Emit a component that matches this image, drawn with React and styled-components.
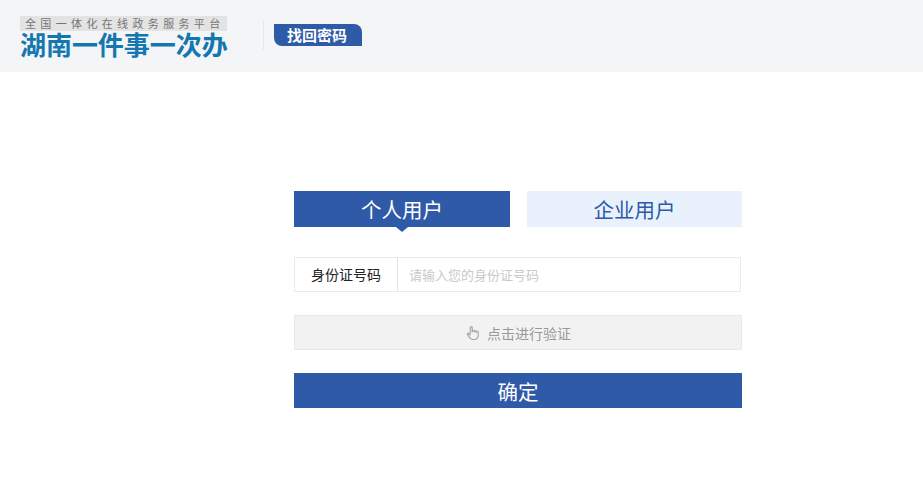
import React from "react";
import styled, { createGlobalStyle } from "styled-components";

const cjk = `"Noto Sans CJK SC", "Liberation Sans", sans-serif`;

const GlobalStyle = createGlobalStyle`
  html, body {
    margin: 0;
    padding: 0;
    background: #fff;
    font-family: ${cjk};
  }
  * {
    box-sizing: border-box;
  }
`;

const Header = styled.header`
  height: 72px;
  background-color: #f4f5f7;
  display: flex;
  align-items: flex-start;
  padding: 16px 0 0 20px;
`;

const Logo = styled.div`
  width: 207px;
  display: flex;
  flex-direction: column;
`;

const LogoStrip = styled.div`
  height: 15px;
  background-color: #e3e3e3;
  color: #757575;
  font-size: 11px;
  line-height: 15px;
  letter-spacing: 4.35px;
  padding-left: 5px;
  white-space: nowrap;
`;

const LogoTitle = styled.div`
  height: 26px;
  color: #1477b0;
  font-size: 26px;
  line-height: 26px;
  font-weight: 700;
  letter-spacing: -0.05px;
  white-space: nowrap;
`;

const Divider = styled.div`
  width: 1px;
  height: 30px;
  margin: 4px 10px 0 36px;
  background-color: #e6e7e9;
`;

const Badge = styled.div`
  width: 88px;
  height: 22px;
  margin-top: 8px;
  background-color: #2e5aa7;
  border-radius: 0 8px 0 8px;
  color: #fff;
  font-size: 15px;
  line-height: 22px;
  font-weight: 700;
  padding-left: 13px;
`;

const Form = styled.main`
  width: 448px;
  margin: 119px 0 0 294px;
  display: flex;
  flex-direction: column;
`;

const Tabs = styled.div`
  display: flex;
  justify-content: space-between;
  margin-bottom: 30px;
`;

const Tab = styled.div`
  position: relative;
  width: ${(p) => (p.$active ? "216px" : "215px")};
  height: 36px;
  background-color: ${(p) => (p.$active ? "#2e5aa7" : "#e9f1fd")};
  color: ${(p) => (p.$active ? "#fff" : "#2e5aa7")};
  font-size: 20.5px;
  line-height: 37px;
  text-align: center;

  ${(p) =>
    p.$active &&
    `&::after {
      content: "";
      position: absolute;
      left: 50%;
      top: 36px;
      margin-left: -6px;
      border-left: 6px solid transparent;
      border-right: 6px solid transparent;
      border-top: 5px solid #2e5aa7;
    }`}
`;

const Field = styled.div`
  height: 35px;
  width: 447px;
  border: 1px solid #ebebeb;
  display: flex;
  align-items: center;
  margin-bottom: 23px;
`;

const FieldLabel = styled.div`
  width: 103px;
  height: 100%;
  border-right: 1px solid #e4e4e4;
  color: #222;
  font-size: 14px;
  line-height: 33px;
  text-align: center;
`;

const FieldInput = styled.input`
  flex: 1;
  height: 100%;
  border: 0;
  outline: 0;
  padding: 0 11px;
  background: transparent;
  font-family: ${cjk};
  font-size: 13px;

  &::placeholder {
    color: #c9c9c9;
    opacity: 1;
  }
`;

const VerifyButton = styled.div`
  height: 35px;
  background-color: #f2f2f2;
  border: 1px solid #e8e8e8;
  color: #999;
  font-size: 14px;
  display: flex;
  align-items: center;
  justify-content: center;
  gap: 6px;
  margin-bottom: 23px;
`;

const SubmitButton = styled.div`
  height: 35px;
  background-color: #2e5aa7;
  color: #fff;
  font-size: 20.5px;
  line-height: 36px;
  text-align: center;
`;

const HandIcon = () => (
  <svg width="16" height="16" viewBox="0 0 16 16" fill="none" stroke="#a3a3a3" strokeWidth="1.1" strokeLinecap="round" strokeLinejoin="round">
    <path d="M5.2 8.6V2.6a1 1 0 0 1 2 0v4.2" />
    <path d="M7.2 6.2a1 1 0 0 1 2 0v.8" />
    <path d="M9.2 6.6a1 1 0 0 1 2 .1v.6" />
    <path d="M11.2 7.2a1 1 0 0 1 2 .1v3c0 2.4-1.5 4.2-4 4.2H8c-1.6 0-2.6-.7-3.4-1.9L2.4 9.4c-.5-.9.7-1.7 1.4-.9l1.4 1.5" />
  </svg>
);

const App = () => (
  <>
    <GlobalStyle />
    <Header>
      <Logo>
        <LogoStrip>全国一体化在线政务服务平台</LogoStrip>
        <LogoTitle>湖南一件事一次办</LogoTitle>
      </Logo>
      <Divider />
      <Badge>找回密码</Badge>
    </Header>
    <Form>
      <Tabs>
        <Tab $active>个人用户</Tab>
        <Tab>企业用户</Tab>
      </Tabs>
      <Field>
        <FieldLabel>身份证号码</FieldLabel>
        <FieldInput placeholder="请输入您的身份证号码" />
      </Field>
      <VerifyButton>
        <HandIcon />
        点击进行验证
      </VerifyButton>
      <SubmitButton>确定</SubmitButton>
    </Form>
  </>
);

export default App;
